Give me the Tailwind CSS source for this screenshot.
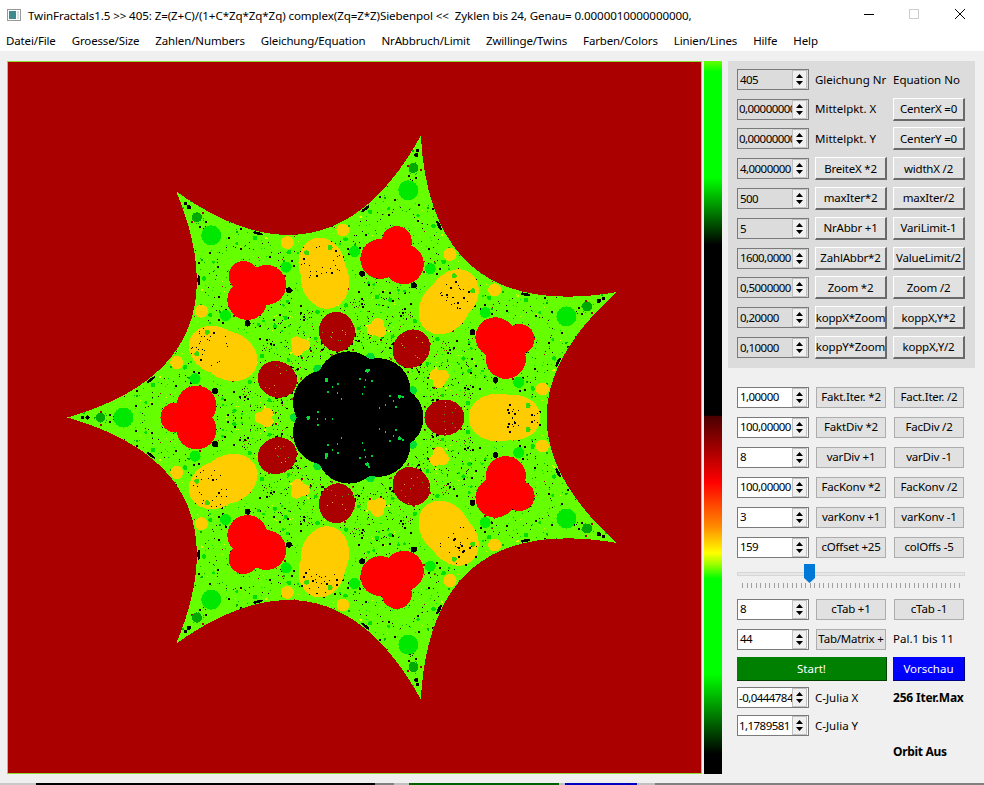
<!DOCTYPE html>
<html lang="de">
<head>
  <meta charset="UTF-8">
  <title>TwinFractals</title>
  <script src="https://cdn.jsdelivr.net/npm/@tailwindcss/browser@4"></script>
</head>
<body class="bg-[#f0f0f0] overflow-hidden">
  <div class="w-[984px] h-[785px] relative overflow-hidden flex flex-col font-['Noto_Sans',sans-serif] text-[11.5px] leading-none text-black">

    <!-- title bar -->
    <div class="h-[30px] bg-white flex items-center shrink-0">
      <div class="ml-[7px] w-[14px] h-[12px] border border-[#999] bg-white flex p-[1px] gap-[1px]">
        <div class="w-[7px] bg-[#3f8a8a]"></div>
        <div class="flex-1 bg-[#d8e4e4]"></div>
      </div>
      <div class="ml-[7px] pt-[1px] whitespace-pre text-[11.6px] tracking-[-0.1px]">TwinFractals1.5 &gt;&gt; 405: Z=(Z+C)/(1+C*Zq*Zq*Zq) complex(Zq=Z*Z)Siebenpol &lt;&lt;  Zyklen bis 24, Genau= 0.0000010000000000,</div>
      <div class="absolute left-[864px] top-[14px] w-[10px] h-[1px] bg-black"></div>
      <div class="absolute left-[909px] top-[9px] w-[10px] h-[10px] border border-[#ccc]"></div>
      <svg class="absolute left-[955px] top-[9px]" width="10" height="10" viewBox="0 0 10 10"><path d="M0 0L10 10M10 0L0 10" stroke="#000" stroke-width="1" fill="none"/></svg>
    </div>

    <!-- menu -->
    <div class="h-[21px] bg-white flex items-center pl-[6px] gap-[16px] shrink-0 whitespace-nowrap tracking-[-0.14px]">
      <span>Datei/File</span><span>Groesse/Size</span><span>Zahlen/Numbers</span><span>Gleichung/Equation</span><span>NrAbbruch/Limit</span><span>Zwillinge/Twins</span><span>Farben/Colors</span><span>Linien/Lines</span><span>Hilfe</span><span>Help</span>
    </div>

    <div class="flex-1 flex pt-[10px] pl-[7px] items-start">
      <!-- fractal -->
      <div class="w-[695px] h-[713px] border border-[#8fdc30] bg-[#aa0000] shrink-0">
        <svg id="fractal" width="693" height="711" viewBox="8 62 693 711" shape-rendering="crispEdges" class="block"></svg>
      </div>
      <!-- palette -->
      <div class="w-[18px] h-[713px] ml-[2px] shrink-0 bg-[linear-gradient(to_bottom,#66ff00_0%,#00ff00_1.5%,#00ff00_16.4%,#000000_25.8%,#000000_49.7%,#4a0000_49.8%,#ff0000_59.1%,#ff8800_65.2%,#ffff00_69%,#aaff00_70.4%,#00ff00_72.6%,#00ff00_86%,#000000_97.2%,#000000_100%)]"></div>

      <!-- controls -->
      <div class="w-[247px] ml-[6px] shrink-0">
        <div id="top" class="h-[307px] bg-[#dcdcdc] pt-[3.5px] pl-[9px]"></div>
        <div id="low" class="mt-[14px] pl-[9px]"></div>
        <div class="pl-[9px] mt-[3px] flex gap-[6px] h-[24px]">
          <div class="w-[150px] bg-[#008000] text-white flex items-center justify-center border-b border-r border-[#004000]">Start!</div>
          <div class="w-[72px] bg-[#0000ff] text-white flex items-center justify-center border-b border-r border-[#000080]">Vorschau</div>
        </div>
        <div id="julia" class="pl-[9px]"></div>
        <div class="pl-[165px] mt-[7px] h-[18px] flex items-center font-bold text-[12px] whitespace-nowrap tracking-[-0.3px]">Orbit Aus</div>
      </div>
    </div>

    <!-- strip of the window behind -->
    <div class="absolute left-0 top-[783px] w-[984px] h-[2px] flex">
      <div class="w-[36px] bg-[#c8c8c8]"></div>
      <div class="w-[339px] bg-black"></div>
      <div class="w-[19px] bg-[#808080]"></div>
      <div class="w-[15px] bg-[#c0c0c0]"></div>
      <div class="w-[150px] bg-[#006000]"></div>
      <div class="w-[6px] bg-[#c0c0c0]"></div>
      <div class="w-[72px] bg-[#0000c0]"></div>
      <div class="w-[18px] bg-[#c0c0c0]"></div>
      <div class="flex-1 bg-[#808080]"></div>
    </div>
  </div>

  <script>
    // spin box, gray=true for the ones on the gray panel
    function spin(val, gray, tight) {
      return `<div class="w-[72px] h-[21px] border border-[#7a7a7a] ${gray ? 'bg-[#dcdcdc]' : 'bg-white'} flex items-center overflow-hidden shrink-0">
        <div class="flex-1 min-w-0 overflow-hidden whitespace-nowrap tracking-[-0.55px] ${tight ? 'pl-[1px]' : 'pl-[2px]'}">${val}</div>
        <div class="w-[15px] h-[19px] mr-[1px] shrink-0 bg-[#f0f0f0] border border-[#c0c0c0] flex flex-col items-center justify-center gap-[3px]">
          <svg width="7" height="4" viewBox="0 0 7 4"><path d="M3.5 0L7 4H0Z" fill="#000"/></svg>
          <svg width="7" height="4" viewBox="0 0 7 4"><path d="M0 0H7L3.5 4Z" fill="#000"/></svg>
        </div>
      </div>`;
    }
    function rbtn(t) {
      return `<div class="w-[72px] h-[23px] bg-[#e1e1e1] border-t border-l border-t-white border-l-white border-b-2 border-r-2 border-b-[#696969] border-r-[#696969] flex items-center justify-center whitespace-nowrap tracking-[-0.2px] shrink-0">${t}</div>`;
    }
    function fbtn(t) {
      return `<div class="w-[70px] h-[21px] ml-[1px] mr-[1px] bg-[#e1e1e1] border border-[#adadad] flex items-center justify-center whitespace-nowrap tracking-[-0.2px] shrink-0">${t}</div>`;
    }
    function lbl(t, bold) {
      return `<div class="w-[72px] shrink-0 whitespace-nowrap ${bold ? 'font-bold text-[12px] tracking-[-0.2px]' : ''}">${t}</div>`;
    }

    const topRows = [
      [spin('405', 1), lbl('Gleichung Nr'), lbl('Equation No')],
      [spin('0,0000000000', 1, 1), lbl('Mittelpkt. X'), rbtn('CenterX =0')],
      [spin('0,0000000000', 1, 1), lbl('Mittelpkt. Y'), rbtn('CenterY =0')],
      [spin('4,0000000', 1), rbtn('BreiteX *2'), rbtn('widthX /2')],
      [spin('500', 1), rbtn('maxIter*2'), rbtn('maxIter/2')],
      [spin('5', 1), rbtn('NrAbbr +1'), rbtn('VariLimit-1')],
      [spin('1600,0000', 1), rbtn('ZahlAbbr*2'), rbtn('ValueLimit/2')],
      [spin('0,5000000', 1), rbtn('Zoom *2'), rbtn('Zoom /2')],
      [spin('0,20000', 1), rbtn('koppX*Zoom'), rbtn('koppX,Y*2')],
      [spin('0,10000', 1), rbtn('koppY*Zoom'), rbtn('koppX,Y/2')],
    ];
    document.getElementById('top').innerHTML = topRows.map(r =>
      `<div class="h-[29.8px] flex items-center gap-[6px]">${r.join('')}</div>`).join('');

    const rowsA = [
      ['1,00000', 'Fakt.Iter. *2', 'Fact.Iter. /2'],
      ['100,00000', 'FaktDiv *2', 'FacDiv /2'],
      ['8', 'varDiv +1', 'varDiv -1'],
      ['100,00000', 'FacKonv *2', 'FacKonv /2'],
      ['3', 'varKonv +1', 'varKonv -1'],
      ['159', 'cOffset +25', 'colOffs -5'],
    ];
    const row = r => `<div class="h-[30px] flex items-center gap-[6px]">${spin(r[0])}${fbtn(r[1])}${fbtn(r[2])}</div>`;
    let ticks = '';
    for (let i = 0; i < 49; i++) ticks += '<span class="w-[1px] h-[5px] bg-[#a0a0a0]"></span>';
    document.getElementById('low').innerHTML =
      rowsA.map(row).join('') +
      `<div class="h-[32px] w-[228px] relative">
        <div class="absolute left-0 right-0 top-[10px] h-[4px] bg-[#e7e7e7] border border-[#d6d6d6]"></div>
        <svg class="absolute left-[67px] top-[2px]" width="11" height="19" viewBox="0 0 11 19"><path d="M0 0H11V14L5.5 19L0 14Z" fill="#0078d7"/></svg>
        <div class="absolute left-[5px] right-[5px] top-[21px] flex justify-between">${ticks}</div>
      </div>` +
      row(['8', 'cTab +1', 'cTab -1']) +
      `<div class="h-[30px] flex items-center gap-[6px]">${spin('44')}${fbtn('Tab/Matrix +')}${lbl('Pal.1 bis 11')}</div>`;

    document.getElementById('julia').innerHTML =
      `<div class="mt-[6px] h-[21px] flex items-center gap-[6px]">${spin('-0,0444784', 0, 1)}${lbl('C-Julia X')}${lbl('256 Iter.Max', 1)}</div>
       <div class="mt-[7px] h-[21px] flex items-center gap-[6px]">${spin('1,1789581', 0, 1)}${lbl('C-Julia Y')}</div>`;

    // fractal: 7 fold star with mirrored features
    const cx = 356.5, cy = 417.5, step = 360 / 7;
    const tips = [], mids = [];
    for (let k = 0; k < 7; k++) { tips.push(180 + k * step); mids.push(k * step); }
    const P = (a, r) => [cx + r * Math.cos(a * Math.PI / 180), cy - r * Math.sin(a * Math.PI / 180)];
    let seed = 40503;
    const rnd = () => { seed = (seed * 1664525 + 1013904223) % 4294967296; return seed / 4294967296; };
    let s = '';

    let d = '';
    tips.forEach((a, i) => {
      const p = P(a, 289), c = P(a + step / 2, 120), q = P(a + step, 289);
      d += (i ? '' : `M${p[0]} ${p[1]}`) + `Q${c[0]} ${c[1]} ${q[0]} ${q[1]}`;
    });
    s += `<defs><clipPath id="star"><path d="${d}Z"/></clipPath></defs>`;
    s += `<path d="${d}Z" fill="#66ff00"/><g clip-path="url(#star)">`;

    const circle = (p, r, c) => `<circle cx="${p[0]}" cy="${p[1]}" r="${r}" fill="${c}"/>`;
    const both = (off, fn) => tips.forEach(a => { fn(a + off); if (off) fn(a - off); });

    // speckles
    const colors = ['#000', '#000', '#000', '#000', '#000', '#000', '#00b000', '#00b000', '#00e000', '#8a5000', '#a00000', '#e8ff00'];
    for (let i = 0; i < 430; i++) {
      const off = rnd() * step / 2, r = 68 + rnd() * 210, c = colors[Math.floor(rnd() * colors.length)];
      const w = rnd() < 0.2 ? 2 : 1;
      both(off, a => {
        const p = P(a, r);
        s += `<rect x="${Math.round(p[0])}" y="${Math.round(p[1])}" width="${w}" height="${w}" fill="${c}"/>`;
      });
    }
    for (let i = 0; i < 12; i++) {
      const off = rnd() * step / 2, r = 75 + rnd() * 170, c = rnd() < 0.7 ? '#00e000' : (rnd() < 0.5 ? '#000' : '#00b000');
      const w = 1.2 + rnd() * 1.3;
      both(off, a => { s += circle(P(a, r), w, c); });
    }

    // arm features
    both(0, a => {
      s += circle(P(a, 256), 5, '#00aa00') + circle(P(a, 233), 10, '#00e800');
      const x = cx + 92;
      s += `<g transform="rotate(${-a} ${cx} ${cy})" fill="#ffcc00">
        <circle cx="${x + 4}" cy="${cy}" r="6"/>
        <circle cx="${x - 2.5}" cy="${cy - 4}" r="6"/>
        <circle cx="${x - 2.5}" cy="${cy + 4}" r="6"/>
      </g>`;
      s += circle(P(a, 62), 4.5, '#00dd33');
      s += circle(P(a, 274), 1.8, '#000') + circle(P(a, 269), 2.2, '#000');
    });
    both(17, a => { s += circle(P(a, 188), 6.5, '#ffcc00'); });
    both(13.5, a => { s += circle(P(a, 166), 5.5, '#00ee00'); });
    both(10.6, a => { s += circle(P(a, 144), 3, '#000'); });
    tips.forEach(a => {
      [[10.4, 49], [-10.4, -49]].forEach(o => {
        const p = P(a + o[0], 209);
        s += `<ellipse cx="${p[0]}" cy="${p[1]}" rx="5" ry="1.4" fill="#000" transform="rotate(${-(a + o[0]) + o[1]} ${p[0]} ${p[1]})"/>`;
      });
    });
    both(14, a => { s += circle(P(a, 240), 2.5, '#00b000'); });

    // big orange and dark red bodies
    mids.forEach(a => {
      const t = `rotate(${-a} ${cx} ${cy})`;
      s += `<g transform="${t}">
        <ellipse cx="${cx + 142}" cy="${cy}" rx="30" ry="24" fill="#ffcc00"/>
        <ellipse cx="${cx + 156}" cy="${cy}" rx="28" ry="23" fill="#ffcc00"/>
        <ellipse cx="${cx + 88}" cy="${cy}" rx="20" ry="18" fill="#aa0000"/>
      </g>`;
      for (let i = 0; i < 14; i++) {
        const off = (rnd() - 0.5) * 14, r = 148 + rnd() * 34, w = rnd() < 0.2 ? 2 : 1;
        [off, -off].forEach(o => {
          const p = P(a + o, r);
          s += `<rect x="${Math.round(p[0])}" y="${Math.round(p[1])}" width="${w}" height="${w}" fill="#000"/>`;
        });
      }
      [4, -4].forEach(o => { s += circle(P(a + o, 172), 2.5, '#33dd00'); });
      for (let i = 0; i < 5; i++) {
        const off = (rnd() - 0.5) * 20, r = 76 + rnd() * 24;
        [off, -off].forEach(o => {
          const p = P(a + o, r);
          s += `<rect x="${Math.round(p[0])}" y="${Math.round(p[1])}" width="1" height="1" fill="${i % 2 ? '#e8c000' : '#60a000'}"/>`;
        });
      }
    });

    // red trefoils
    both(0, a => {
      const t = `rotate(${-a} ${cx} ${cy})`, x = cx + 168;
      s += `<g transform="${t}" fill="#ff0000">
        <circle cx="${x + 13}" cy="${cy}" r="15"/>
        <circle cx="${x - 8}" cy="${cy - 12}" r="20"/>
        <circle cx="${x - 8}" cy="${cy + 12}" r="20"/>
      </g>`;
    });

    // black centre
    mids.forEach(a => { s += circle(P(a, 35), 32, '#000'); });
    s += circle([cx, cy], 40, '#000');
    both(0, a => {
      s += circle(P(a, 48), 2, '#00dd33');
      [50, 40, 32, 25].forEach((r, i) => { const p = P(a, r); s += `<rect x="${Math.round(p[0])}" y="${Math.round(p[1])}" width="${i ? 1 : 2}" height="2" fill="#00dd33"/>`; });
    });
    both(9, a => {
      const p = P(a, 40);
      s += `<rect x="${Math.round(p[0])}" y="${Math.round(p[1])}" width="2" height="2" fill="#00cc33"/>`;
    });
    s += '</g>';
    document.getElementById('fractal').innerHTML = s;
  </script>
</body>
</html>
